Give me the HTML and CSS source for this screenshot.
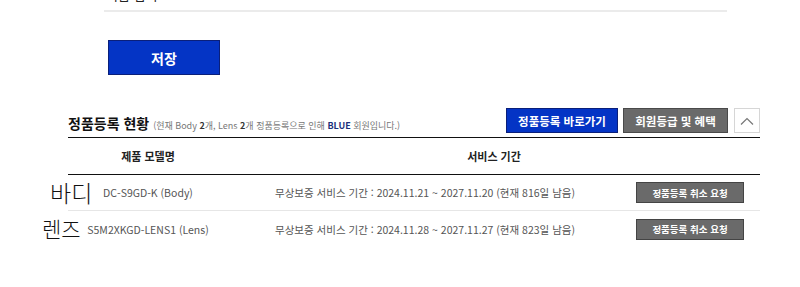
FILE: index.html
```html
<!DOCTYPE html>
<html lang="ko">
<head>
<meta charset="utf-8">
<link rel="stylesheet" href="styles.css">
</head>
<body>
<div class="top-field">
  <div class="top-text">이름 입력</div>
</div>
<button class="save-btn">저장</button>

<section class="reg">
  <div class="reg-head">
    <h2 class="reg-title">정품등록 현황 <span class="reg-sub">(현재 Body <b>2</b>개, Lens <b>2</b>개 정품등록으로 인해 <b class="blue">BLUE</b> 회원입니다.)</span></h2>
    <div class="reg-actions">
      <a class="btn btn-blue">정품등록 바로가기</a>
      <a class="btn btn-gray">회원등급 및 혜택</a>
      <a class="btn-up" aria-label="접기">
        <svg width="14" height="8" viewBox="0 0 14 8"><path d="M1 7.5 L7 1.5 L13 7.5" fill="none" stroke="#777" stroke-width="1.2"/></svg>
      </a>
    </div>
  </div>
  <div class="reg-table">
    <div class="th">제품 모델명</div>
    <div class="th th-span">서비스 기간</div>

    <div class="td td-model"><span class="note">바디</span>DC-S9GD-K (Body)</div>
    <div class="td td-period">무상보증 서비스 기간 : 2024.11.21 ~ 2027.11.20 (현재 816일 남음)</div>
    <div class="td td-act"><a class="btn-cancel">정품등록 취소 요청</a></div>

    <div class="td td-model last"><span class="note note-lens">렌즈</span>S5M2XKGD-LENS1 (Lens)</div>
    <div class="td td-period last">무상보증 서비스 기간 : 2024.11.28 ~ 2027.11.27 (현재 823일 남음)</div>
    <div class="td td-act last"><a class="btn-cancel">정품등록 취소 요청</a></div>
  </div>
</section>
</body>
</html>
```
FILE: styles.css
```css
* { box-sizing: border-box; }
body {
  margin: 0;
  background: #fff;
  font-family: "Noto Sans CJK KR", "Noto Sans", sans-serif;
  color: #333;
}
.top-field {
  margin-left: 104px;
  width: 623px;
  height: 12px;
  border-bottom: 2px solid #ebebeb;
  overflow: hidden;
}
.top-text {
  margin-top: -13px;
  padding-left: 2px;
  font-size: 13px;
  line-height: 16px;
  color: #222;
}
.save-btn {
  display: block;
  margin: 28px 0 0 108px;
  width: 112px;
  height: 35px;
  background: #0434c5;
  border: 1px solid #0a1f7a;
  color: #fff;
  font-family: inherit;
  font-size: 14px;
  font-weight: 700;
  padding: 0;
}
.reg {
  margin-top: 33px;
  margin-left: 68px;
  width: 692px;
}
.reg-head {
  display: flex;
  align-items: center;
  height: 25px;
}
.reg-title {
  margin: 5px 0 0;
  flex: 1;
  font-size: 14px;
  font-weight: 700;
  color: #111;
  white-space: nowrap;
}
.reg-sub {
  font-size: 9px;
  font-weight: 400;
  color: #777;
}
.reg-sub b { color: #333; font-weight: 700; }
.reg-sub b.blue { color: #1a2f7a; }
.reg-actions {
  display: flex;
  height: 25px;
}
.btn {
  display: flex;
  align-items: center;
  justify-content: center;
  height: 25px;
  color: #fff;
  font-size: 11.5px;
  font-weight: 700;
}
.btn-blue {
  width: 112px;
  background: #0434c5;
  border: 1px solid #0a1f7a;
}
.btn-gray {
  width: 105px;
  margin-left: 5px;
  background: #6a6a6a;
  border: 1px solid #4a4a4a;
}
.btn-up {
  display: flex;
  align-items: center;
  justify-content: center;
  width: 26px;
  height: 25px;
  margin-left: 6px;
  border: 1px solid #d6d6d6;
  background: #fff;
}
.reg-table {
  margin-top: 4px;
  display: grid;
  grid-template-columns: 160px 392px 140px;
  border-top: 1.5px solid #111;
}
.th {
  height: 37px;
  display: flex;
  align-items: center;
  justify-content: center;
  font-size: 11px;
  font-weight: 700;
  color: #222;
  border-bottom: 1.5px solid #111;
}
.th-span { grid-column: span 2; }
.td {
  height: 36px;
  display: flex;
  align-items: center;
  font-size: 10.5px;
  color: #555;
  white-space: nowrap;
  border-bottom: 1px solid #e6e6e6;
}
.td.last { border-bottom: none; }
.td-model {
  position: relative;
  justify-content: center;
}
.td-period { padding-left: 47px; }
.td-act { justify-content: center; }
.note {
  position: absolute;
  left: -18px;
  top: 2px;
  font-size: 23px;
  font-weight: 300;
  color: #111;
  line-height: 30px;
}
.note-lens {
  left: -26px;
  font-size: 21px;
}
.btn-cancel {
  display: flex;
  align-items: center;
  justify-content: center;
  width: 108px;
  height: 21px;
  background: #6a6a6a;
  border: 1px solid #444;
  color: #fff;
  font-size: 9.5px;
  font-weight: 700;
}
```
